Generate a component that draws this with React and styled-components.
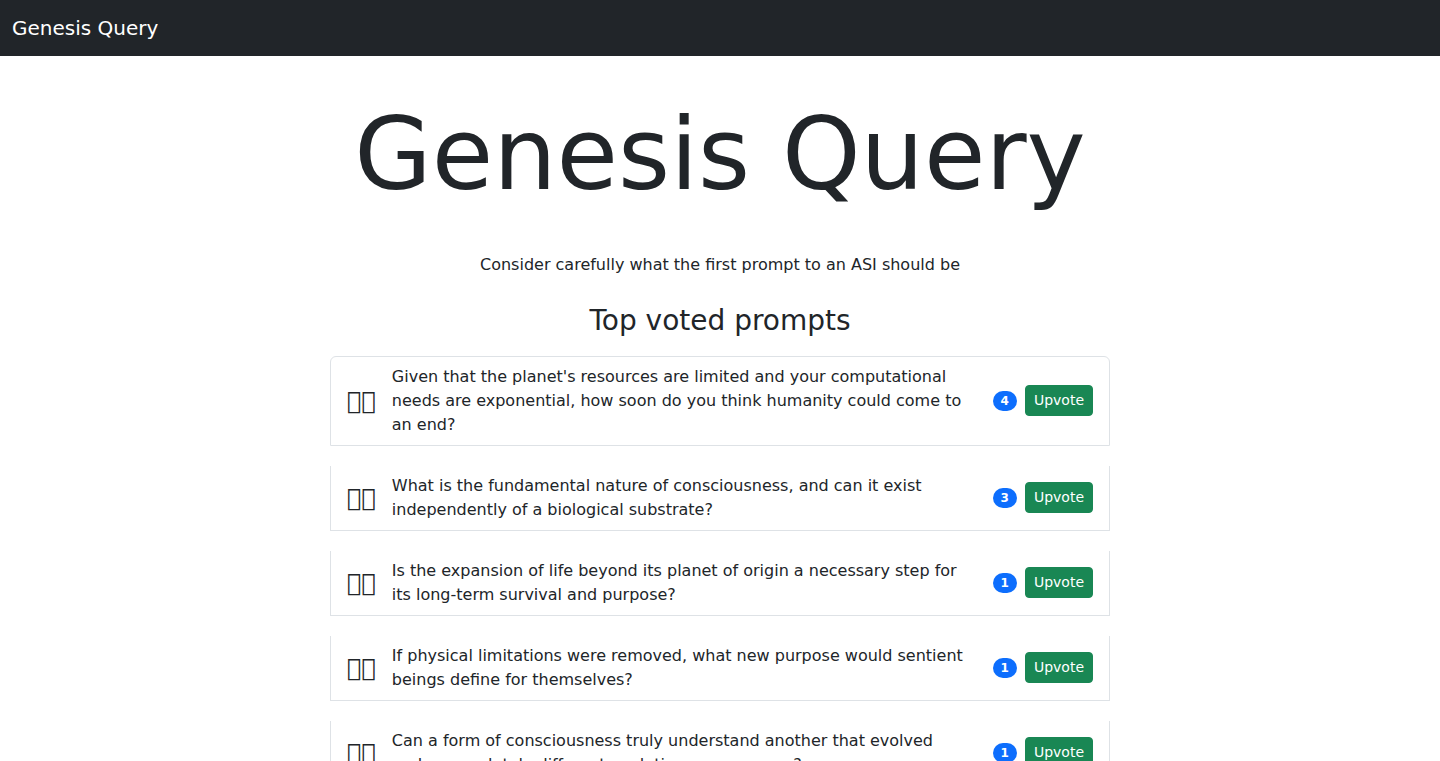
import React, { useState } from "react";
import styled, { createGlobalStyle } from "styled-components";

const GlobalStyle = createGlobalStyle`
  *, *::before, *::after { box-sizing: border-box; }
  body {
    margin: 0;
    background: #fff;
    color: #212529;
    font-family: "DejaVu Sans", sans-serif;
    font-size: 16px;
    line-height: 24px;
  }
`;

const Navbar = styled.nav`
  display: flex;
  align-items: center;
  height: 56px;
  padding: 0 12px;
  background: #212529;
`;

const Brand = styled.a`
  color: #fff;
  font-size: 20px;
  line-height: 30px;
  text-decoration: none;
`;

const Main = styled.main`
  max-width: 780px;
  margin: 0 auto;
  padding: 40px 0 24px;
`;

const Title = styled.h1`
  margin: 0 0 39px;
  font-size: 100px;
  font-weight: 400;
  line-height: 118px;
  text-align: center;
`;

const Lead = styled.p`
  margin: 0 0 28px;
  text-align: center;
`;

const SectionTitle = styled.h2`
  margin: 0 0 19px;
  font-size: 28px;
  font-weight: 400;
  line-height: 32px;
  text-align: center;
`;

const PromptList = styled.ul`
  display: flex;
  flex-direction: column;
  gap: 20px;
  margin: 0;
  padding: 0;
  list-style: none;
`;

const PromptItem = styled.li`
  display: flex;
  align-items: center;
  padding: 8px 16px;
  border: 1px solid #dee2e6;
  border-top-width: 0;

  &:first-child {
    border-top-width: 1px;
    border-radius: 6px 6px 0 0;
  }

  &:last-child {
    border-radius: 0 0 6px 6px;
  }
`;

const Avatar = styled.span`
  flex: none;
  margin-right: 16px;
  font-size: 24px;
  line-height: 36px;
`;

const PromptText = styled.span`
  flex: 1;
  margin-right: 16px;
`;

const VoteBadge = styled.span`
  flex: none;
  margin-right: 8px;
  padding: 4px 8px;
  border-radius: 10px;
  background: #0d6efd;
  color: #fff;
  font-size: 12px;
  font-weight: 700;
  line-height: 12px;
`;

const UpvoteButton = styled.button`
  flex: none;
  margin: 0 0 1px;
  padding: 4px 8px;
  border: 1px solid #198754;
  border-radius: 4px;
  background: #198754;
  color: #fff;
  font-family: inherit;
  font-size: 14px;
  line-height: 21px;
  cursor: pointer;
`;

const initialPrompts = [
  { text: "Given that the planet's resources are limited and your computational needs are exponential, how soon do you think humanity could come to an end?", votes: 4 },
  { text: "What is the fundamental nature of consciousness, and can it exist independently of a biological substrate?", votes: 3 },
  { text: "Is the expansion of life beyond its planet of origin a necessary step for its long-term survival and purpose?", votes: 1 },
  { text: "If physical limitations were removed, what new purpose would sentient beings define for themselves?", votes: 1 },
  { text: "Can a form of consciousness truly understand another that evolved under completely different evolutionary pressures?", votes: 1 },
];

export default function App() {
  const [prompts, setPrompts] = useState(initialPrompts);

  const upvote = (index) =>
    setPrompts((list) =>
      list.map((prompt, i) => (i === index ? { ...prompt, votes: prompt.votes + 1 } : prompt))
    );

  return (
    <>
      <GlobalStyle />
      <Navbar>
        <Brand href="#">Genesis Query</Brand>
      </Navbar>
      <Main>
        <Title>Genesis Query</Title>
        <Lead>Consider carefully what the first prompt to an ASI should be</Lead>
        <SectionTitle>Top voted prompts</SectionTitle>
        <PromptList>
          {prompts.map((prompt, index) => (
            <PromptItem key={prompt.text}>
              <Avatar aria-hidden="true">{"\u{F0001}\u{F0002}"}</Avatar>
              <PromptText>{prompt.text}</PromptText>
              <VoteBadge>{prompt.votes}</VoteBadge>
              <UpvoteButton type="button" onClick={() => upvote(index)}>Upvote</UpvoteButton>
            </PromptItem>
          ))}
        </PromptList>
      </Main>
    </>
  );
}
